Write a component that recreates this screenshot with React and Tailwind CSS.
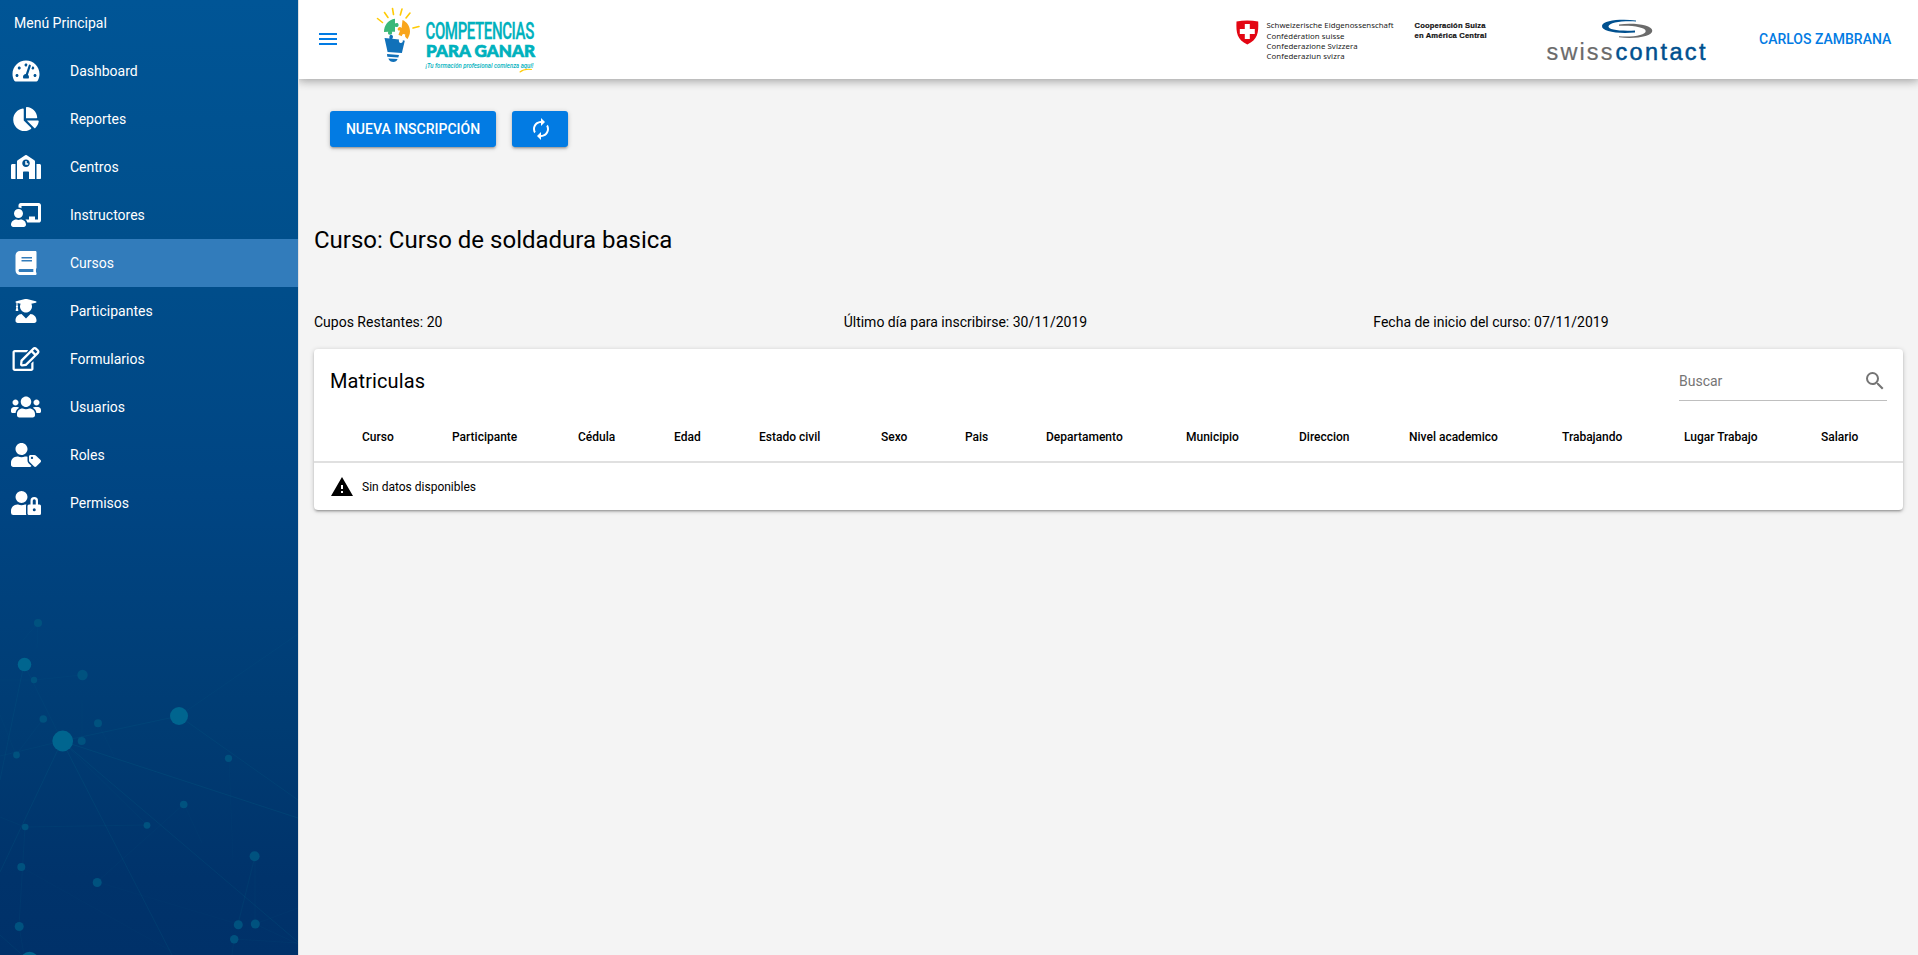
import React from "react";
import {
  FaTachometerAlt, FaChartPie, FaSchool, FaChalkboardTeacher, FaBook,
  FaUserGraduate, FaRegEdit, FaUsers, FaUserTag, FaUserLock,
} from "react-icons/fa";
import { MdMenu, MdAutorenew, MdSearch, MdWarning } from "react-icons/md";

const menu = [
  { label: "Dashboard", Icon: FaTachometerAlt, size: "w-7" },
  { label: "Reportes", Icon: FaChartPie, size: "w-[26px]" },
  { label: "Centros", Icon: FaSchool, size: "w-[30px]" },
  { label: "Instructores", Icon: FaChalkboardTeacher, size: "w-[30px]" },
  { label: "Cursos", Icon: FaBook, size: "w-[22px]", active: true },
  { label: "Participantes", Icon: FaUserGraduate, size: "w-[22px]" },
  { label: "Formularios", Icon: FaRegEdit, size: "w-7" },
  { label: "Usuarios", Icon: FaUsers, size: "w-[30px]" },
  { label: "Roles", Icon: FaUserTag, size: "w-[30px]" },
  { label: "Permisos", Icon: FaUserLock, size: "w-[30px]" },
];

const columns = [
  { label: "Curso", width: "w-[138px] pl-12" },
  { label: "Participante", width: "w-[126px]" },
  { label: "Cédula", width: "w-24" },
  { label: "Edad", width: "w-[85px]" },
  { label: "Estado civil", width: "w-[122px]" },
  { label: "Sexo", width: "w-[84px]" },
  { label: "Pais", width: "w-[81px]" },
  { label: "Departamento", width: "w-[140px]" },
  { label: "Municipio", width: "w-[113px]" },
  { label: "Direccion", width: "w-[110px]" },
  { label: "Nivel academico", width: "w-[153px]" },
  { label: "Trabajando", width: "w-[122px]" },
  { label: "Lugar Trabajo", width: "w-[137px]" },
  { label: "Salario", width: "" },
];

// [cx, cy, r, bright]
const nodes = [
  [38, 33, 4, 0], [24.5, 74.5, 6.8, 1], [34, 90, 3.2, 0], [82.5, 85, 5.2, 0],
  [43.3, 129, 3.8, 0], [98, 133.3, 4, 0], [62.7, 151, 10.4, 1], [81.7, 151, 4, 0],
  [16.5, 165, 3.4, 0], [179, 126, 9, 1], [228.5, 168.3, 3.6, 0], [183.7, 214.5, 3.8, 0],
  [147, 235.3, 3.4, 0], [25.2, 237, 3.3, 0], [21.3, 277, 4, 0], [97.2, 292.5, 4.5, 0],
  [254.6, 266.3, 5, 0], [238.3, 334.7, 4.5, 0], [255.3, 334, 4.5, 0], [234.2, 349.2, 4.2, 0],
  [19.2, 336.5, 4.5, 0], [29.5, 371, 9.2, 1],
];

// [x1, y1, x2, y2, opacity]
const links = [
  [179, 126, 298, 44, 0.08], [179, 126, 298, 210, 0.12], [179, 126, 62, 151, 0.12],
  [62, 151, 298, 228, 0.17], [62, 151, 298, 352, 0.15], [62, 151, 172, 365, 0.15],
  [62, 151, 0, 282, 0.15], [62, 151, 24, 74, 0.08], [24, 74, 0, 190, 0.12],
  [62, 151, 0, 166, 0.1], [25, 237, 147, 235, 0.09], [25, 237, 19, 336, 0.09],
  [147, 235, 62, 151, 0.08], [184, 214, 97, 292, 0.06], [184, 214, 202, 253, 0.05],
  [255, 266, 238, 334, 0.12], [255, 266, 255, 334, 0.07], [229, 168, 233, 270, 0.05],
  [234, 349, 232, 365, 0.1], [234, 349, 298, 353, 0.08], [255, 334, 298, 354, 0.07],
  [255, 334, 298, 318, 0.06], [97, 292, 238, 334, 0.04], [21, 277, 180, 366, 0.05],
  [38, 33, 23, 50, 0.06], [38, 33, 37, 58, 0.05], [34, 90, 82, 85, 0.06],
  [82, 110, 82, 151, 0.07], [43, 129, 16, 165, 0.07], [16, 165, 0, 125, 0.06],
  [98, 133, 114, 166, 0.05], [29, 371, 0, 345, 0.13], [19, 336, 24, 365, 0.08],
  [25, 237, 0, 227, 0.08], [0, 90, 34, 90, 0.05],
];

function NetworkPattern() {
  return (
    <svg className="block h-[365px] w-[298px]" viewBox="0 0 298 365">
      <g opacity="0.55">
        {links.map(([x1, y1, x2, y2, o], i) => (
          <line key={i} x1={x1} y1={y1} x2={x2} y2={y2} stroke="#00b4b4" strokeOpacity={o} />
        ))}
      </g>
      {nodes.map(([cx, cy, r, bright], i) => (
        <circle key={i} cx={cx} cy={cy} r={r} fill={bright ? "#00658f" : "#00527f"} />
      ))}
    </svg>
  );
}

function CompetenciasLogo() {
  return (
    <svg className="h-[79px] w-[165px]" viewBox="375 0 165 79">
      <g stroke="#ffcb05" strokeWidth="1.6" strokeLinecap="round">
        <path d="M377.5 18.5l5 4M384.5 12.500l3.500 5M392.500 8.500l1 6M402 9l-1.700 6M410 13l-4 5M419 26.500l-6 1.500" />
      </g>
      <path d="M384 32c0-7 4.500-12.300 11-13.200v4.700c1-1 3.800-1 3.600 1.500 0 2.200-2.400 2.600-3.600 1.500v5.300h-3.200c1 1.500-.2 3.200-2 3-1.700-.1-2.300-1.700-1.500-3z" fill="#3bb878" />
      <path d="M402.500 20c4.500 2 7.500 6.200 7.500 11.500 0 2.800-1 4.800-2.400 7.500-2.200-1.400-3.300-3-2.200-4.300-2-1.500-4 0-3.300 1.600-2-.6-3.600-1.500-3.600-1.500l1.600-4.300c-2.200.6-3.200-1.400-1.800-2.800 1-1 2.400-.8 3.300.2z" fill="#f9a51b" />
      <path d="M384.500 38l5 .5c-.7-2.500.8-4 2.200-3.600 1.600.4 1.600 2.300.5 3.900l6.800.7c-.5 1.800.3 3.400 1.800 3.500 1.500 0 2.300-1.400 2-2.800l2 .6-2.900 12.200-14.300-1z" fill="#1171b9" />
      <path d="M387 53.900l12 1-.7 2.600-11-.7zM388.300 58.500l9.300.6c-1.200 4.200-7.800 3.800-9.300-.6z" fill="#1171b9" />
      <g fill="#00b1bd" fontFamily="Roboto, sans-serif">
        <text transform="translate(425.500 39) scale(0.64 1)" fontSize="23.500" fontWeight="500" stroke="#00b1bd" strokeWidth="0.300" textLength="170">COMPETENCIAS</text>
        <text x="426" y="57" fontFamily="Lato, sans-serif" fontSize="17" fontWeight="900" stroke="#00b1bd" strokeWidth="0.700" textLength="109">PARA GANAR</text>
        <text transform="translate(425.500 67.500) scale(0.83 1)" fontSize="7.200" fontWeight="500" fontStyle="italic" textLength="130">¡Tu formación profesional comienza aquí!</text>
      </g>
      <path d="M520 72q4-3.500 11.500-2.500" fill="none" stroke="#ffcb05" strokeWidth="1.100" strokeLinecap="round" />
    </svg>
  );
}

function SwissCooperationLogo() {
  return (
    <svg className="h-[79px] w-[265px]" viewBox="1230 0 265 79">
      <path d="M1236.500 21.500c7-1.200 14.500-1.200 21.700 0 .5 11.500-.5 18-10.900 23-10.300-5-11.300-11.500-10.800-23z" fill="#e30613" />
      <path d="M1244.800 24h5v5h5v5h-5v5h-5v-5h-5v-5h5z" fill="#fff" />
      <g fill="#222" fontFamily="'Noto Sans', sans-serif" fontSize="7.800">
        <text x="1266.500" y="28" textLength="127">Schweizerische Eidgenossenschaft</text>
        <text x="1266.500" y="38.500" textLength="78">Confédération suisse</text>
        <text x="1266.500" y="49" textLength="91">Confederazione Svizzera</text>
        <text x="1266.500" y="59" textLength="78">Confederaziun svizra</text>
      </g>
      <g fill="#111" stroke="#111" strokeWidth="0.200" fontFamily="'Liberation Sans', sans-serif" fontSize="7.600" fontWeight="700">
        <text x="1414.500" y="28.300" textLength="71">Cooperación Suiza</text>
        <text x="1414.500" y="38.300" textLength="72">en América Central</text>
      </g>
    </svg>
  );
}

function SwisscontactLogo() {
  return (
    <svg className="h-[79px] w-[170px]" viewBox="1540 0 170 79">
      <path d="M1636 20.500c-15-1.700-33-.3-34 5.300-.8 5.700 15 8.200 33 6.700l0-2c-15 .8-27-.7-26.500-4.200.5-3.600 13.500-5.600 27.500-4.800z" fill="#00508f" />
      <path d="M1619 24.500c16-2 33 .8 33.300 6.200.2 5.700-17 8.600-33.300 6.600v-1c14 1 27-1 26.700-5.300-.2-3.800-13-5.800-26.700-5.200z" fill="#6b6b6b" />
      <g fontFamily="'Liberation Sans', sans-serif" fontSize="23.500">
        <text x="1546.500" y="60" fill="#6b6b6b" stroke="#6b6b6b" strokeWidth="0.200" textLength="66">swiss</text>
        <text x="1615.500" y="60" fill="#00508f" stroke="#00508f" strokeWidth="0.500" textLength="90">contact</text>
      </g>
    </svg>
  );
}

function Sidebar() {
  return (
    <aside className="z-20 flex w-[299px] shrink-0 flex-col border-r border-[#e0e0e0] bg-[linear-gradient(180deg,#005596_0%,#004f8c_25%,#004583_52%,#003c73_76%,#00336b_92%,#003169_100%)] text-white">
      <div className="flex h-[47px] items-center pb-0.5 pl-3.5">Menú Principal</div>
      <nav className="flex flex-col">
        {menu.map(({ label, Icon, size, active }) => (
          <a key={label} className={active ? "flex h-12 items-center bg-[#327cbb]" : "flex h-12 items-center"}>
            <span className="flex w-[52px] justify-center">
              <Icon className={`h-6 shrink-0 ${size}`} />
            </span>
            <span className="pl-[18px]">{label}</span>
          </a>
        ))}
      </nav>
      <div className="mt-auto">
        <NetworkPattern />
      </div>
    </aside>
  );
}

function Header() {
  return (
    <header className="z-10 flex h-[79px] shrink-0 items-center bg-white pl-[17px] shadow-[0_0_10px_2px_rgba(0,0,0,0.2),0_0_10px_rgba(0,0,0,0.24)]">
      <MdMenu className="mb-0.5 size-6 text-[#027be3]" />
      <div className="ml-[35px]"><CompetenciasLogo /></div>
      <div className="ml-auto flex items-center">
        <SwissCooperationLogo />
        <div className="ml-[45px]"><SwisscontactLogo /></div>
        <span className="ml-[49px] mr-[27px] w-[132px] whitespace-nowrap pb-0.5 font-medium text-[#027be3]">CARLOS ZAMBRANA</span>
      </div>
    </header>
  );
}

const elevation = "shadow-[0_1px_5px_rgba(0,0,0,0.2),0_2px_2px_rgba(0,0,0,0.14),0_3px_1px_-2px_rgba(0,0,0,0.12)]";

export default function App() {
  return (
    <div className="flex h-[955px] w-full overflow-hidden bg-[#f4f4f4] font-[Roboto,sans-serif] text-sm text-black">
      <Sidebar />
      <div className="flex min-w-0 grow flex-col">
        <Header />
        <main className="px-[15px] pt-8">
          <div className="flex gap-4 pl-4">
            <button className={`h-9 w-[166px] rounded-[3px] bg-[#027be3] font-medium text-white ${elevation}`}>NUEVA INSCRIPCIÓN</button>
            <button className={`flex h-9 w-14 items-center justify-center rounded-[3px] bg-[#027be3] pl-px text-white ${elevation}`}>
              <MdAutorenew className="size-6" />
            </button>
          </div>
          <h1 className="mt-[77px] text-2xl leading-8">Curso: Curso de soldadura basica</h1>
          <div className="mt-14 grid grid-cols-3 leading-5">
            <div>Cupos Restantes: 20</div>
            <div>Último día para inscribirse: 30/11/2019</div>
            <div>Fecha de inicio del curso: 07/11/2019</div>
          </div>
          <section className={`mt-[17px] rounded bg-white ${elevation}`}>
            <div className="flex h-16 items-center justify-between px-4">
              <h2 className="text-xl tracking-[0.005em]">Matriculas</h2>
              <label className="flex h-10 w-[208px] items-center justify-between border-b border-black/25 text-[#757575]">
                <span>Buscar</span>
                <MdSearch className="size-6" />
              </label>
            </div>
            <table className="w-full table-fixed text-left text-xs">
              <thead>
                <tr className="h-[49px] border-b-2 border-[#e0e0e0]">
                  {columns.map((c) => (
                    <th key={c.label} className={`whitespace-nowrap p-0 font-medium ${c.width}`}>{c.label}</th>
                  ))}
                </tr>
              </thead>
            </table>
            <div className="flex h-[47px] items-center gap-2 pl-4 pt-px text-xs">
              <MdWarning className="size-6" />
              <span>Sin datos disponibles</span>
            </div>
          </section>
        </main>
      </div>
    </div>
  );
}
